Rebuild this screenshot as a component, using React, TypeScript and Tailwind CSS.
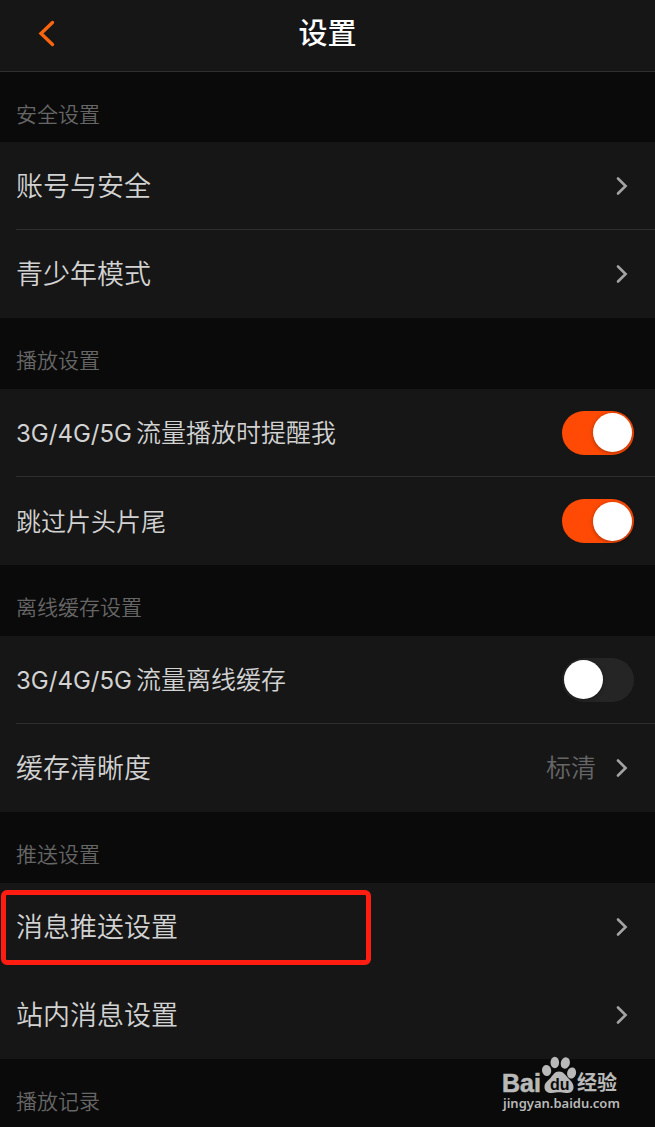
import React, { useState } from 'react'

type Row = {
  label: string
  prefix?: string
  kind: 'link' | 'switch'
  value?: string
  on?: boolean
  marked?: boolean
}

type Section = {
  title: string
  divided: boolean
  rows: Row[]
}

const sections: Section[] = [
  {
    title: '安全设置',
    divided: true,
    rows: [
      { label: '账号与安全', kind: 'link' },
      { label: '青少年模式', kind: 'link' },
    ],
  },
  {
    title: '播放设置',
    divided: true,
    rows: [
      { prefix: '3G/4G/5G', label: '流量播放时提醒我', kind: 'switch', on: true },
      { label: '跳过片头片尾', kind: 'switch', on: true },
    ],
  },
  {
    title: '离线缓存设置',
    divided: true,
    rows: [
      { prefix: '3G/4G/5G', label: '流量离线缓存', kind: 'switch', on: false },
      { label: '缓存清晰度', kind: 'link', value: '标清' },
    ],
  },
  {
    title: '推送设置',
    divided: false,
    rows: [
      { label: '消息推送设置', kind: 'link', marked: true },
      { label: '站内消息设置', kind: 'link' },
    ],
  },
]

function Chevron() {
  return (
    <svg width="12" height="20" viewBox="0 0 12 20" fill="none" aria-hidden="true">
      <path d="M2 2.5L9.6 10L2 17.5" stroke="#a3a3a3" strokeWidth="2.6" strokeLinecap="round" />
    </svg>
  )
}

function SwitchRow({ row }: { row: Row }) {
  const [on, setOn] = useState(Boolean(row.on))
  return (
    <label className="flex h-full w-full cursor-pointer items-center justify-between pr-[21px]">
      <span className="pt-0.5 text-[25px] leading-9">
        {row.prefix && <span className="mr-1 text-2xl leading-9 font-normal">{row.prefix}</span>}
        {row.label}
      </span>
      <input
        type="checkbox"
        role="switch"
        checked={on}
        onChange={(e) => setOn(e.target.checked)}
        className="flex h-11 w-18 shrink-0 cursor-pointer appearance-none items-center rounded-full bg-[#252525] px-[2px] before:block before:size-[39px] before:rounded-full before:bg-white before:shadow-[0_1px_4px_rgba(0,0,0,0.35)] checked:justify-end checked:bg-[#ff4a05]"
      />
    </label>
  )
}

function LinkRow({ row }: { row: Row }) {
  return (
    <button type="button" className="flex h-full w-full items-center justify-between pr-[27px] text-left">
      <span className="pt-0.5 text-[27px] leading-9">{row.label}</span>
      <span className="flex items-center gap-5">
        {row.value && <span className="text-[25px] leading-9 text-[#666666]">{row.value}</span>}
        <Chevron />
      </span>
    </button>
  )
}

function Heading({ title }: { title: string }) {
  return <h2 className="px-4 pt-7 text-[21px] leading-[30px] text-[#666666]">{title}</h2>
}

function Watermark() {
  return (
    <a href="#jingyan" aria-label="Baidu 经验" className="absolute right-[25px] bottom-[11px]">
      <svg width="130" height="60" viewBox="0 0 130 60" fill="#b9b9b9">
        <ellipse cx="46.6" cy="14.5" rx="4.6" ry="5.6" transform="rotate(-10 46.6 14.5)" />
        <ellipse cx="54.8" cy="6.5" rx="4.3" ry="5.8" />
        <ellipse cx="65.3" cy="7" rx="4.5" ry="5.8" transform="rotate(15 65.3 7)" />
        <ellipse cx="71.6" cy="17" rx="4.4" ry="5.6" transform="rotate(15 71.6 17)" />
        <path d="M59 15.5C63.5 15.5 65.5 19 68 22C71 25 74 27.5 73.5 32C73 36 69.5 37.2 66 37C63 36.8 61.5 36.3 59 36.3C56.5 36.3 55 37 51.5 37C47.5 37 44.5 35 44.5 31C44.5 26.5 48 25 50.5 22C53 19 54.5 15.5 59 15.5Z" />
        <text x="2" y="36" fontSize="25" fontWeight="700" fontFamily="Liberation Sans, sans-serif" stroke="#b9b9b9" strokeWidth="0.6">
          Bai
        </text>
        <text x="50" y="34" fontSize="16" fontWeight="700" fill="#0a0a0a" fontFamily="Liberation Sans, sans-serif">
          du
        </text>
        <text x="77" y="34" fontSize="20" fontWeight="700" fontFamily="Noto Sans CJK SC, sans-serif">
          经验
        </text>
        <text x="3" y="52" fontSize="13" fontWeight="600" fontFamily="Noto Sans, sans-serif">
          jingyan.baidu.com
        </text>
      </svg>
    </a>
  )
}

export default function App(): React.JSX.Element {
  return (
    <main
      lang="zh-CN"
      className="relative w-full overflow-hidden bg-[#0a0a0a] font-['Inter','Noto_Sans_CJK_SC',sans-serif] font-[350] text-[#d2d2d2]"
    >
      <header className="grid h-[72px] grid-cols-[1fr_auto_1fr] items-center border-b border-[#303030] bg-[#161616] pb-1">
        <button type="button" aria-label="返回" className="ml-9 flex size-8 items-center">
          <svg width="20" height="28" viewBox="0 0 20 28" fill="none">
            <path d="M16.5 2.5L5 13.5L16.5 24.5" stroke="#f76511" strokeWidth="3.4" strokeLinecap="round" />
          </svg>
        </button>
        <h1 className="text-[29px] leading-10 font-medium text-white">设置</h1>
      </header>

      {sections.map((section, n) => (
        <section key={section.title}>
          <div className={n === 0 ? 'h-[70px]' : 'h-[71px]'}>
            <Heading title={section.title} />
          </div>
          <ul className="bg-[#161616]">
            {section.rows.map((row, i) => (
              <li key={row.label} className="relative h-22 pl-4">
                <div className={section.divided && i === 0 ? 'h-full border-b border-[#2d2d2d]' : 'h-full'}>
                  {row.kind === 'switch' ? <SwitchRow row={row} /> : <LinkRow row={row} />}
                </div>
                {row.marked && (
                  <div className="pointer-events-none absolute top-[7px] left-px h-[75px] w-[370px] rounded-md border-5 border-[#ff1d12]" />
                )}
              </li>
            ))}
          </ul>
        </section>
      ))}

      <div className="pb-[10px]">
        <Heading title="播放记录" />
      </div>
      <Watermark />
    </main>
  )
}
